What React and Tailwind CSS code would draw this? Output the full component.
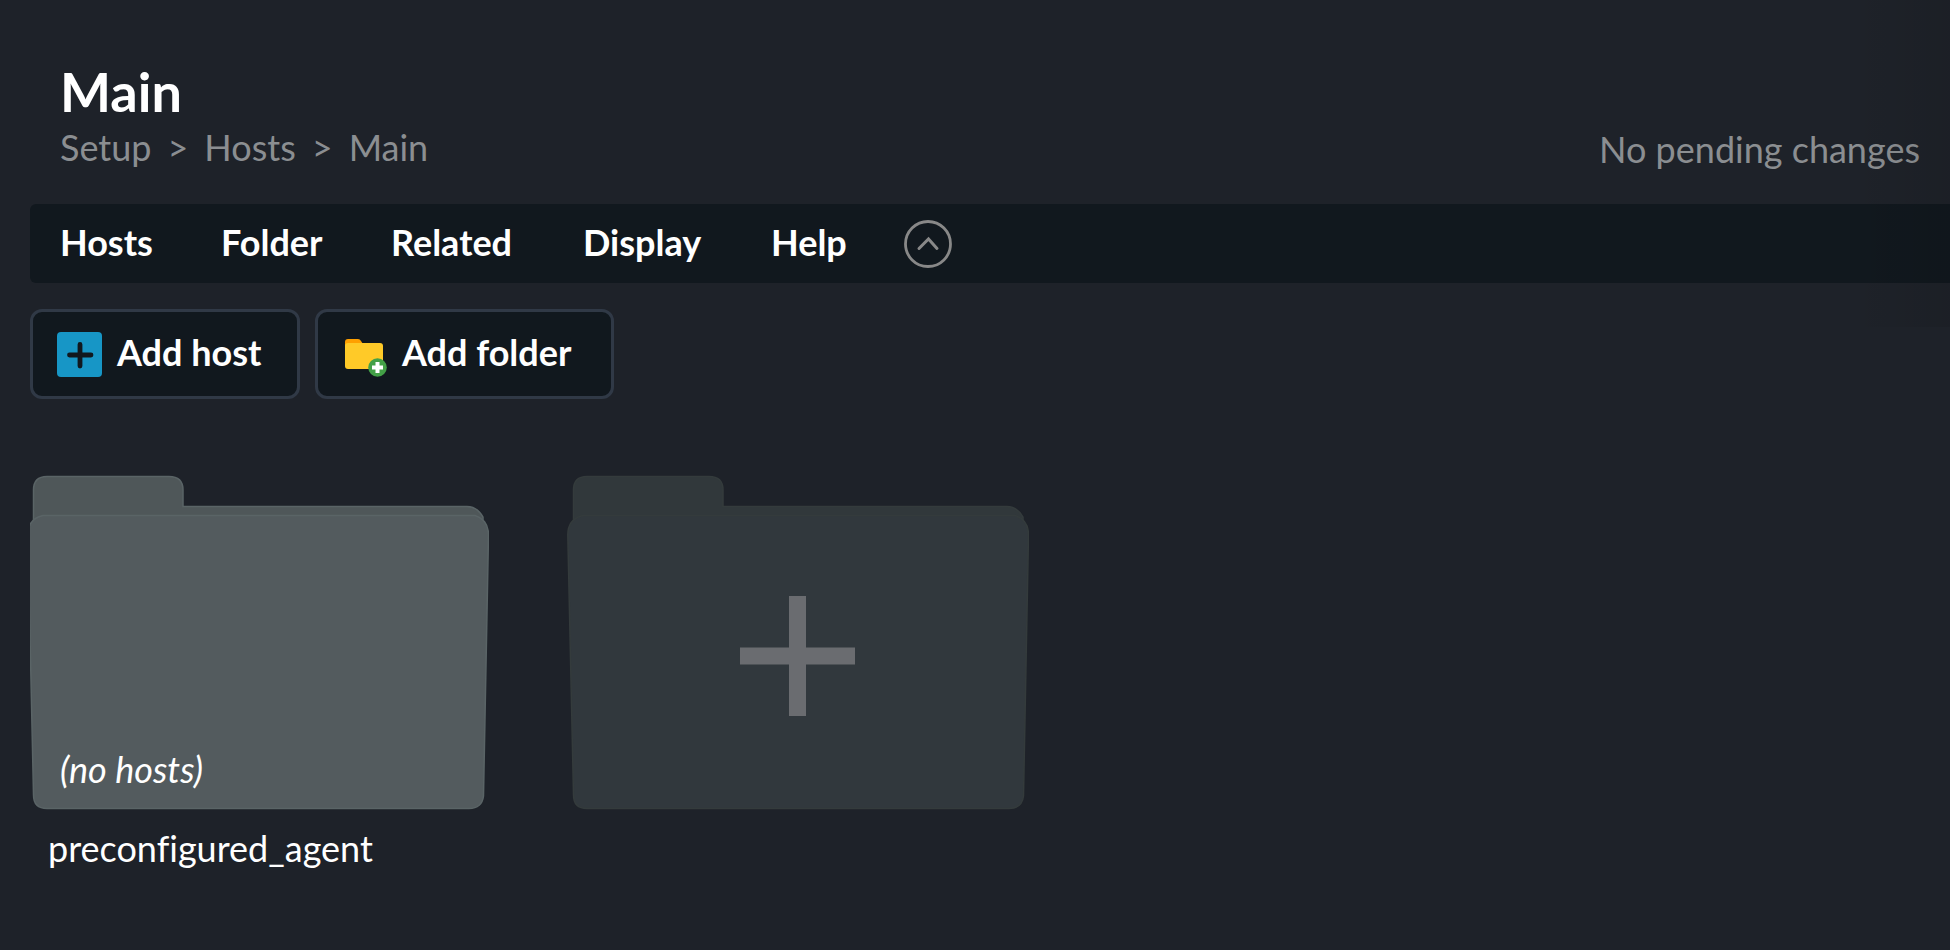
const menus = [
  { label: "Hosts", width: "w-[161px]" },
  { label: "Folder", width: "w-[170px]" },
  { label: "Related", width: "w-[192px]" },
  { label: "Display", width: "w-[188px]" },
  { label: "Help", width: "w-[133px]" },
];

function AddHostIcon() {
  return (
    <svg viewBox="0 0 45 45" className="size-[45px]" aria-hidden="true">
      <rect width="45" height="45" rx="4" fill="#1796c6" />
      <path d="M23 12.500v21.500M12.500 23h21.500" stroke="#11181e" strokeWidth="4.8" strokeLinecap="round" />
    </svg>
  );
}

function AddFolderIcon() {
  return (
    <svg viewBox="0 0 45 45" className="size-[45px]" aria-hidden="true">
      <path d="M3 10Q3 7 6 7H16Q18 7 19 9L21 12V18H3Z" fill="#ffa000" />
      <rect x="3" y="11" width="38" height="26" rx="3" fill="#ffca28" />
      <circle cx="35.5" cy="35.5" r="9.3" fill="#43a047" />
      <path d="M35.5 30v11M30 35.5h11" stroke="#fff" strokeWidth="4" />
    </svg>
  );
}

function FolderShape({ back, front, edge, plus }) {
  return (
    <svg viewBox="0 0 462 340" className="block h-[340px] w-[462px]" aria-hidden="true">
      <path
        d="M6.500 60V19Q6.500 5.500 20 5.500H142Q156 5.500 156 19V35.500H440Q450 35.500 456 46V60Z"
        fill={back}
        stroke={edge}
        strokeWidth="1.500"
      />
      <path
        d="M16 44.500H448Q461.500 49 461.500 64L456.500 325Q455 337.500 442 337.500H20Q6.500 337.500 6.500 324L.8 64Q.8 48 16 44.500Z"
        fill={front}
        stroke={edge}
        strokeWidth="1.500"
      />
      {plus && <path d="M230.500 125v120M173 185h115" stroke="#6a6c70" strokeWidth="17" />}
    </svg>
  );
}

function ActionButton({ icon, label, width }) {
  return (
    <button
      type="button"
      className={`flex h-[90px] items-center gap-[15px] rounded-xl border-3 border-[#303946] bg-[#11181e] px-6 ${width}`}
    >
      {icon}
      <span className="pb-1">{label}</span>
    </button>
  );
}

export default function App() {
  return (
    <div className="relative min-h-screen overflow-hidden bg-[#1e2229] pl-[30px] font-['Lato',sans-serif] text-[36px] leading-[44px] text-white [font-variant-ligatures:none]">
      <header className="flex items-end justify-between pt-[59px] pr-[30px] pl-[30px]">
        <div className="pb-0.5">
          <h1 className="text-[54px] leading-[66px] font-bold">Main</h1>
          <nav aria-label="Breadcrumb" className="flex gap-4 text-[#8b8e91]">
            <a href="#setup">Setup</a>
            <span>&gt;</span>
            <a href="#hosts">Hosts</a>
            <span>&gt;</span>
            <a href="#main">Main</a>
          </nav>
        </div>
        <p className="text-[#8b8e91]">No pending changes</p>
      </header>

      <nav aria-label="Page menu" className="mt-[33px] flex h-[79px] items-center rounded-l-md bg-[#11181e] pl-[30px] font-bold">
        {menus.map((m) => (
          <button key={m.label} type="button" className={`pb-1 text-left ${m.width}`}>
            {m.label}
          </button>
        ))}
        <button type="button" aria-label="Hide page actions">
          <svg viewBox="0 0 48 48" className="size-12" fill="none" stroke="#888" aria-hidden="true">
            <circle cx="24" cy="24" r="22.500" strokeWidth="2.800" />
            <path d="M15 28.500L24.500 19L33 28.500" strokeWidth="3" strokeLinecap="round" />
          </svg>
        </button>
      </nav>

      <div className="mt-[26px] flex gap-[15px] font-bold">
        <ActionButton icon={<AddHostIcon />} label="Add host" width="min-w-[270px]" />
        <ActionButton icon={<AddFolderIcon />} label="Add folder" width="min-w-[299px]" />
      </div>

      <main className="mt-[72px] flex gap-[78px] overflow-hidden">
        <a href="#preconfigured_agent" className="-ml-[3px] block">
          <span className="grid">
            <span className="col-start-1 row-start-1">
              <FolderShape back="#4f5759" front="#535b5e" edge="#5a6466" />
            </span>
            <em className="col-start-1 row-start-1 self-end pb-5 pl-[33px]">(no hosts)</em>
          </span>
          <span className="mt-[15px] block pl-[21px]">preconfigured_agent</span>
        </a>
        <button type="button" aria-label="Add folder" className="self-start">
          <FolderShape back="#31383b" front="#31383d" edge="#343b3c" plus />
        </button>
      </main>

      <div className="pointer-events-none absolute top-0 right-0 h-[327px] w-[100px] bg-linear-to-r from-transparent to-black/8" />
    </div>
  );
}
